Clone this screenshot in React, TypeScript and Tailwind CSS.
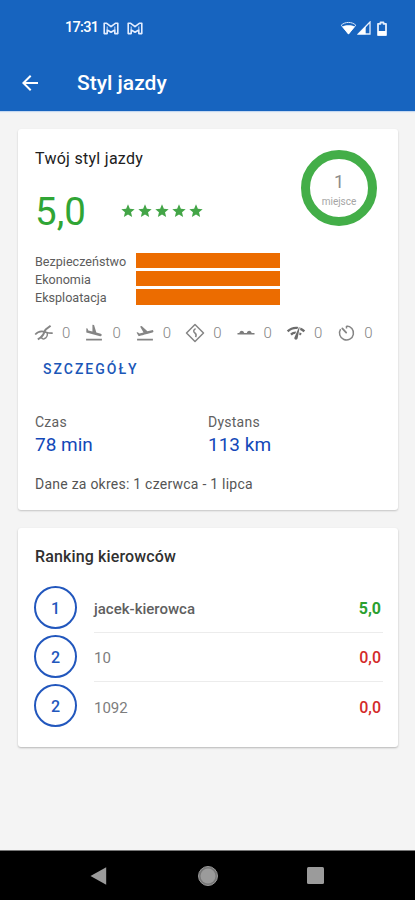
import type { ReactNode } from "react";
import {
  MdArrowBack,
  MdFlightLand,
  MdFlightTakeoff,
  MdNetworkCheck,
  MdStar,
} from "react-icons/md";

const bars = ["Bezpieczeństwo", "Ekonomia", "Eksploatacja"];

const drivers = [
  { place: 1, name: "jacek-kierowca", score: "5,0", current: true },
  { place: 2, name: "10", score: "0,0", current: false },
  { place: 2, name: "1092", score: "0,0", current: false },
];

function MailIcon() {
  return (
    <svg width="16" height="13" viewBox="0 0 16 13" fill="none">
      <path
        d="M1.200 1.300h2.500L8 4.700l4.300-3.400h2.500v10.300h-3V8L8 10.300 4.200 8v3.600h-3z"
        stroke="#e3edff"
        strokeWidth="1.600"
        strokeLinejoin="round"
      />
      <path d="M4.200 4.600V8M11.800 4.600V8" stroke="#b9d0f2" strokeWidth="1.100" />
    </svg>
  );
}

function SwerveIcon() {
  return (
    <svg width="20" height="20" viewBox="0 0 20 20" fill="none">
      <path
        d="M1.200 11.600c2.200-2.700 5.300-3.700 8.600-3 2.400.5 4.600 1.900 8.900 1.500"
        stroke="#858585"
        strokeWidth="1.600"
      />
      <path
        d="M16.600 2.800 12 6.300c-1.600 1.400-1.700 3.700-3 5.600-1.200 1.900-2.900 3.300-5.200 4.500"
        stroke="#858585"
        strokeWidth="2"
      />
      <path
        d="M13.200 9.600c.6 2.900-.8 5.500-3 6.200-1.400.4-2.400-.2-2.600-1.500"
        stroke="#858585"
        strokeWidth="1.500"
      />
    </svg>
  );
}

function RoadSignIcon() {
  return (
    <svg width="20" height="20" viewBox="0 0 20 20" fill="none">
      <path
        d="M10 1.500 18.500 10 10 18.500 1.500 10z"
        stroke="#858585"
        strokeWidth="1.500"
        strokeLinejoin="round"
      />
      <path
        d="M10.600 5.700c-2.400 1.300-2.300 2.900-.8 4.100s1.700 2.600.8 4.300"
        stroke="#858585"
        strokeWidth="1.500"
      />
    </svg>
  );
}

function BumpsIcon() {
  return (
    <svg width="20" height="20" viewBox="0 0 20 20" fill="#7c7c7c">
      <path d="M1.500 11.500V10h1.800c.9-2.900 4-2.900 4.900 0h2.600c.9-2.900 4-2.900 4.900 0h2.800v1.500z" />
    </svg>
  );
}

function TimerIcon() {
  return (
    <svg width="20" height="20" viewBox="0 0 20 20" fill="none">
      <path
        d="M10.500 2.900v2.600M10.500 3a7 7 0 1 1-5.900 3.200"
        stroke="#858585"
        strokeWidth="1.500"
      />
      <path
        d="M6.300 5.400 10.200 9.600"
        stroke="#858585"
        strokeWidth="1.800"
        strokeLinecap="round"
      />
    </svg>
  );
}

const events: ReactNode[] = [
  <SwerveIcon />,
  <MdFlightLand size={20} />,
  <MdFlightTakeoff size={20} />,
  <RoadSignIcon />,
  <BumpsIcon />,
  <MdNetworkCheck size={20} color="#6c6c6c" />,
  <TimerIcon />,
];

function StatusBar() {
  return (
    <div className="flex h-14 items-center pr-[28px] pl-[65px] text-white">
      <span className="w-[38px] text-[14.5px] leading-5 font-medium tracking-[-0.7px]">
        17:31
      </span>
      <MailIcon />
      <div className="ml-[8px]">
        <MailIcon />
      </div>
      <div className="ml-auto flex items-center">
        <svg width="17" height="15" viewBox="0 0 17 15" fill="none">
          <path
            d="M1.200 4.200c4-3.700 10.600-3.700 14.600 0L8.500 13z"
            stroke="#d8e6fb"
            strokeWidth="1"
          />
          <path d="M2.300 5.700c3.300-1.800 9.100-1.800 12.400 0L8.500 13.500z" fill="#fff" />
        </svg>
        <svg width="14" height="14" viewBox="0 0 14 14">
          <path
            d="M1.300 13 13 1v12z"
            fill="none"
            stroke="#e6effd"
            strokeWidth="1.300"
          />
          <path d="M1 13.300 8.700 5.300v8z" fill="#fff" />
        </svg>
        <svg width="10" height="15" viewBox="0 0 10 15" className="ml-[6px]">
          <path
            d="M1 2.800h2.500v-1.500h3v1.500H9V14H1z"
            fill="none"
            stroke="#e6effd"
            strokeWidth="1.800"
            strokeLinejoin="round"
          />
          <path d="M1 10h8v4H1z" fill="#fff" />
        </svg>
      </div>
    </div>
  );
}

function PlaceRing() {
  return (
    <div className="flex size-[76px] flex-col items-center rounded-full border-[9.5px] border-[#43ae48] pt-[13px] text-[#8c8c8c]">
      <span className="text-[18px] leading-[20px]">1</span>
      <span className="mt-[4px] text-[10px] leading-[12px] text-[#a5a5a5]">
        miejsce
      </span>
    </div>
  );
}

function StyleCard() {
  return (
    <section className="h-[381px] rounded-[3px] bg-white pl-[17px] shadow-[0_1px_2px_rgba(0,0,0,0.2)]">
      <div className="flex h-[124px] justify-between pr-[21px]">
        <div>
          <h2 className="mt-[20px] text-[16px] leading-5 tracking-[0.28px] text-[#202020]">
            Twój styl jazdy
          </h2>
          <div className="mt-[20px] flex h-[44px] items-center">
            <span className="w-[85px] pt-[2px] text-[38.5px] leading-[44px] text-[#30a535]">
              5,0
            </span>
            <div className="flex gap-px text-[#43a547]">
              {[1, 2, 3, 4, 5].map((star) => (
                <MdStar key={star} size={16} />
              ))}
            </div>
          </div>
        </div>
        <div className="mt-[21px]">
          <PlaceRing />
        </div>
      </div>
      <div className="flex flex-col gap-[3px]">
        {bars.map((label) => (
          <div key={label} className="flex h-[15.2px] items-center">
            <span className="w-[100.5px] pt-[2px] text-[12.6px] leading-[15px] text-[#5c5c5c]">
              {label}
            </span>
            <div className="h-full w-[144.5px] bg-[#ec6c00]" />
          </div>
        ))}
      </div>
      <div className="mt-[18px] -ml-px flex h-5 text-[#858585]">
        {events.map((icon, i) => (
          <div key={i} className="flex w-[50.4px] shrink-0 items-center">
            {icon}
            <span className="ml-[8px] text-[15px] leading-5 font-light">0</span>
          </div>
        ))}
      </div>
      <button className="mt-[16px] ml-[8px] block text-[14px] leading-5 font-medium tracking-[2px] text-[#1b57b8]">
        SZCZEGÓŁY
      </button>
      <div className="mt-[33px] flex">
        <div className="w-[173px]">
          <p className="text-[14px] leading-5 tracking-[0.25px] text-[#606060]">
            Czas
          </p>
          <p className="mt-px text-[19px] leading-6 text-[#1348b8]">78 min</p>
        </div>
        <div>
          <p className="text-[14px] leading-5 tracking-[0.25px] text-[#606060]">
            Dystans
          </p>
          <p className="mt-px text-[19px] leading-6 text-[#1348b8]">113 km</p>
        </div>
      </div>
      <p className="mt-[17px] text-[14px] leading-5 tracking-[0.24px] text-[#555]">
        Dane za okres: 1 czerwca - 1 lipca
      </p>
    </section>
  );
}

function RankingCard() {
  return (
    <section className="mt-[18px] h-[219px] rounded-[3px] bg-white pt-[19px] pr-[15px] pl-4 shadow-[0_1px_2px_rgba(0,0,0,0.25)]">
      <h2 className="mb-[17px] pl-px text-[16px] leading-5 font-medium tracking-[0.13px] text-[#303030]">
        Ranking kierowców
      </h2>
      {drivers.map((driver, i) => (
        <div key={i} className="flex h-[49.2px] items-stretch">
          <div className="mt-[2px] flex size-[43px] shrink-0 items-center justify-center rounded-full border-2 border-[#2257bd] pt-[2px] text-[16px] font-medium text-[#2257bd]">
            {driver.place}
          </div>
          <div
            className={`ml-[17px] flex flex-1 items-center justify-between pt-[2px] text-[15px] ${
              i < 2 ? "border-b border-[#ececec]" : ""
            }`}
          >
            <span
              className={
                driver.current ? "font-medium text-[#5f5f5f]" : "text-[#7d7d7d]"
              }
            >
              {driver.name}
            </span>
            <span
              className={`pr-[2px] text-[16px] ${
                driver.current
                  ? "font-bold text-[#2ba02f]"
                  : "font-medium text-[#d32a2a]"
              }`}
            >
              {driver.score}
            </span>
          </div>
        </div>
      ))}
    </section>
  );
}

export default function App() {
  return (
    <div className="flex h-[900px] w-[415px] flex-col overflow-hidden bg-[#f4f4f4] font-[Roboto,sans-serif]">
      <header className="h-[111px] shrink-0 bg-[#1764bf] shadow-[0_1px_1px_#c5d8f0]">
        <StatusBar />
        <div className="flex h-[54px] items-center pl-[18px] text-white">
          <MdArrowBack size={24} />
          <h1 className="mt-px ml-[35px] text-[21px] font-medium">Styl jazdy</h1>
        </div>
      </header>
      <main className="flex-1 pt-[18px] pr-[17px] pl-[18px]">
        <StyleCard />
        <RankingCard />
      </main>
      <nav className="flex h-[50px] shrink-0 items-center justify-between border-t border-[#777] bg-black pr-[91px] pl-[90px]">
        <svg width="17" height="18" viewBox="0 0 17 18">
          <path d="M.5 9 16.200.3v17.400z" fill="#9b9b9b" />
        </svg>
        <svg width="22" height="22" viewBox="0 0 22 22" className="ml-[2px]">
          <circle cx="11" cy="11" r="9.500" fill="#777" stroke="#999" />
          <circle cx="11" cy="11" r="7.500" fill="#9b9b9b" />
        </svg>
        <div className="size-[17px] rounded-[1.5px] bg-[#9b9b9b]" />
      </nav>
    </div>
  );
}
